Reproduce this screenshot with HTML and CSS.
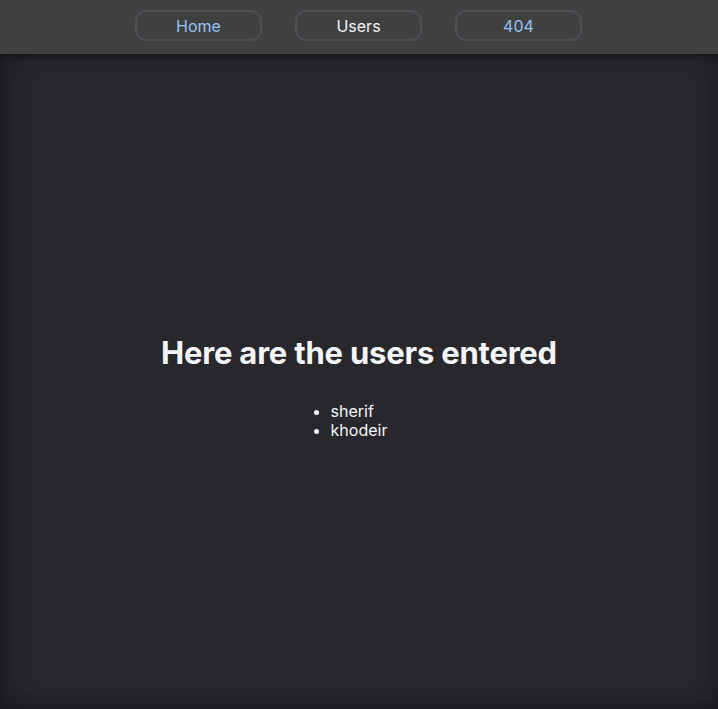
FILE: index.html
```html
<!DOCTYPE html>
<html>
<head>
<meta charset="utf-8">
<link rel="stylesheet" href="styles.css">
</head>
<body>
<nav class="topbar">
  <a class="navbtn link">Home</a>
  <a class="navbtn active">Users</a>
  <a class="navbtn link">404</a>
</nav>
<main class="content">
  <h1 class="title">Here are the users entered</h1>
  <ul class="users">
    <li>sherif</li>
    <li>khodeir</li>
  </ul>
</main>
</body>
</html>
```
FILE: styles.css
```css
html, body {
  margin: 0;
  padding: 0;
  height: 100%;
}
body {
  background: #28272c;
  font-family: Inter, "Noto Sans", sans-serif;
  color: #f4f6fa;
  display: flex;
  flex-direction: column;
  overflow: hidden;
}
.topbar {
  height: 54px;
  flex: 0 0 54px;
  background: #404040;
  display: flex;
  justify-content: center;
  align-items: center;
  gap: 33px;
  padding: 0 1px 3px 0;
  box-sizing: border-box;
  position: relative;
  z-index: 1;
  box-shadow: 0 2px 6px rgba(0,0,0,0.35);
}
.navbtn {
  width: 127px;
  height: 31px;
  box-sizing: border-box;
  border: 2px solid #4b5058;
  border-radius: 11px;
  display: flex;
  align-items: center;
  justify-content: center;
  font-size: 16px;
  text-decoration: none;
  cursor: pointer;
}
.navbtn.link { color: #93c5f4; }
.navbtn.active { color: #f4f6fa; }
.content {
  flex: 1;
  display: flex;
  flex-direction: column;
  align-items: center;
  justify-content: center;
  background: #28272c;
  box-shadow: inset 14px 0 30px -10px rgba(0,0,0,0.35), inset -10px 0 24px -10px rgba(0,0,0,0.25), inset 0 -10px 24px -10px rgba(0,0,0,0.25);
  padding-top: 10px;
}
.title {
  font-size: 31px;
  font-weight: 700;
  margin: 0 0 31px 0;
  letter-spacing: -0.2px;
  color: #f4f6fa;
}
.users {
  margin: 0;
  padding: 0 40px;
  font-size: 16px;
  line-height: 18.5px;
  color: #f4f6fa;
}
```
